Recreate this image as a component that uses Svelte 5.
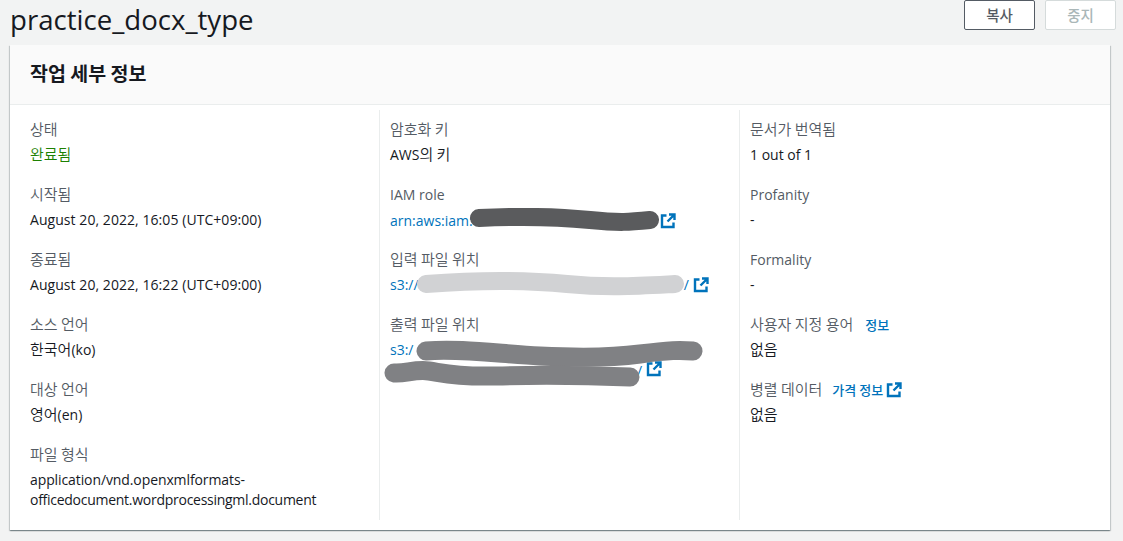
<script>
  const ext = "M6.5 2.5H2v11.5h11.5V9.5 M9 1.5h5.5V7 M14.5 1.5 7.5 8.5";
</script>

<div class="page">
  <header class="top">
    <h1>practice_docx_type</h1>
    <div class="actions">
      <button class="btn">복사</button>
      <button class="btn off">중지</button>
    </div>
  </header>

  <section class="card">
    <div class="card-head"><h2>작업 세부 정보</h2></div>
    <div class="cols">
      <div class="col">
        <div class="item"><div class="lbl ko">상태</div><div class="val ok ko">완료됨</div></div>
        <div class="item"><div class="lbl ko">시작됨</div><div class="val date">August 20, 2022, 16:05 (UTC+09:00)</div></div>
        <div class="item"><div class="lbl ko">종료됨</div><div class="val date">August 20, 2022, 16:22 (UTC+09:00)</div></div>
        <div class="item"><div class="lbl ko">소스 언어</div><div class="val"><span class="ko">한국어</span>(ko)</div></div>
        <div class="item"><div class="lbl ko">대상 언어</div><div class="val"><span class="ko">영어</span>(en)</div></div>
        <div class="item"><div class="lbl ko">파일 형식</div><div class="val mime"><span class="m1">application/vnd.openxmlformats-</span><br /><span class="m2">officedocument.wordprocessingml.document</span></div></div>
      </div>

      <div class="col">
        <div class="item"><div class="lbl ko">암호화 키</div><div class="val">AWS<span class="ko">의 키</span></div></div>
        <div class="item">
          <div class="lbl en">IAM role</div>
          <div class="val link role">
            <span class="txt">arn:aws:iam:<span class="gap g-role"></span>
              <svg class="mark" style="left:80px;top:-2px" width="190" height="24" viewBox="0 0 190 24"><path d="M9 10C50 8 90 9 120 12S160 14 180 12" fill="none" stroke="#5a5b5d" stroke-width="18" stroke-linecap="round" /></svg>
            </span>
            <svg class="ext" viewBox="0 0 16 16"><path d={ext} /></svg>
          </div>
        </div>
        <div class="item">
          <div class="lbl ko">입력 파일 위치</div>
          <div class="val link">
            <span class="txt">s3://<span class="gap g-in"></span>/
              <svg class="mark" style="left:27px;top:-3px" width="270" height="26" viewBox="0 0 270 26"><path d="M9 13C60 9 110 9 150 13S220 15 258 13" fill="none" stroke="#d1d2d4" stroke-width="18" stroke-linecap="round" /></svg>
            </span>
            <svg class="ext" viewBox="0 0 16 16"><path d={ext} /></svg>
          </div>
        </div>
        <div class="item">
          <div class="lbl ko">출력 파일 위치</div>
          <div class="val link two">
            <span class="txt">s3:/<br /><span class="gap g-out"></span>/
              <svg class="mark" style="left:-6px;top:-4px" width="320" height="56" viewBox="0 0 320 56"><path d="M42 16C76 13 116 19 156 21S226 23 256 19 296 15 309 16" fill="none" stroke="#808184" stroke-width="19" stroke-linecap="round" /><path d="M10 38C21 39 31 34 45 36S71 42 111 41 195 40 246 42" fill="none" stroke="#808184" stroke-width="19" stroke-linecap="round" /></svg>
            </span>
            <svg class="ext" viewBox="0 0 16 16"><path d={ext} /></svg>
          </div>
        </div>
      </div>

      <div class="col">
        <div class="item"><div class="lbl ko">문서가 번역됨</div><div class="val">1 out of 1</div></div>
        <div class="item"><div class="lbl en">Profanity</div><div class="val">-</div></div>
        <div class="item"><div class="lbl en">Formality</div><div class="val">-</div></div>
        <div class="item"><div class="lbl ko">사용자 지정 용어<span class="info">정보</span></div><div class="val ko">없음</div></div>
        <div class="item">
          <div class="lbl ko">병렬 데이터<span class="info price">가격 정보</span><svg class="ext" viewBox="0 0 16 16"><path d={ext} /></svg></div>
          <div class="val ko">없음</div>
        </div>
      </div>
    </div>
  </section>
</div>

<style>
  :global(body) {
    margin: 0;
    background: #f2f3f3;
  }
  .page {
    font-family: "Open Sans", "Noto Sans", "Noto Sans CJK KR", sans-serif;
    font-size: 14px;
    line-height: 22px;
    color: #16191f;
    height: 541px;
    overflow: hidden;
  }
  .ko {
    font-size: 15px;
    font-family: "Noto Sans CJK KR", sans-serif;
    font-weight: 350;
  }
  .top {
    display: flex;
    justify-content: space-between;
    height: 45px;
    padding: 0 7px 0 10px;
  }
  h1 {
    margin: 0;
    font-size: 27.6px;
    font-weight: 400;
    line-height: 38px;
  }
  .actions {
    display: flex;
    gap: 10px;
  }
  .btn {
    width: 71px;
    height: 30px;
    border: 1px solid #545b64;
    border-radius: 2px;
    background: #fff;
    color: #545b64;
    font: 500 14.5px/20px "Noto Sans CJK KR", sans-serif;
    padding: 0;
  }
  .btn.off {
    border-color: #d5dbdb;
    color: #aab7b8;
  }
  .card {
    margin: 0 13px 0 10px;
    height: 485px;
    background: #fff;
    box-shadow: 0 1px 1px 0 rgba(0, 28, 36, 0.3), 1px 1px 1px 0 rgba(0, 28, 36, 0.15), -1px 1px 1px 0 rgba(0, 28, 36, 0.15);
  }
  .card-head {
    height: 60px;
    box-sizing: border-box;
    padding: 17px 20px;
    background: #fafafa;
    border-bottom: 1px solid #eaeded;
  }
  h2 {
    margin: 0;
    font: 700 19.5px/22px "Noto Sans CJK KR", sans-serif;
  }
  .cols {
    display: grid;
    grid-template-columns: repeat(3, 360px);
    padding: 5px 0 0 10px;
  }
  .col {
    box-sizing: border-box;
    height: 410px;
    padding: 8px 10px 0;
    border-right: 1px solid #eaeded;
  }
  .col:last-child {
    border-right: 0;
  }
  .item {
    height: 47px;
    margin-bottom: 18px;
  }
  .lbl {
    color: #545b64;
    height: 22px;
    margin-bottom: 4px;
    white-space: nowrap;
  }
  .lbl.en {
    height: 21px;
    padding-top: 1px;
  }
  .ok {
    color: #1d8102;
  }
  .val {
    line-height: 21px;
  }
  .val.ko {
    line-height: 19px;
  }
  .val .ko {
    line-height: 0;
  }
  .date {
    letter-spacing: 0.06px;
  }
  .mime {
    line-height: 20px;
    padding-top: 1px;
  }
  .m1 {
    letter-spacing: -0.1px;
  }
  .m2 {
    letter-spacing: -0.27px;
  }
  .link {
    color: #0073bb;
    white-space: nowrap;
    display: flex;
    align-items: center;
    gap: 4px;
  }
  .role {
    padding-top: 1px;
  }
  .txt {
    position: relative;
    display: inline-block;
  }
  .mark {
    position: absolute;
    pointer-events: none;
  }
  .gap {
    display: inline-block;
  }
  .g-role {
    width: 183px;
  }
  .g-in {
    width: 265px;
  }
  .g-out {
    width: 247px;
  }
  .two {
    align-items: flex-end;
    line-height: 21px;
  }
  .two .ext {
    margin-bottom: 4px;
  }
  .ext {
    width: 16px;
    height: 16px;
    flex: none;
    fill: none;
    stroke: #0073bb;
    stroke-width: 2.4;
  }
  .info {
    color: #0073bb;
    font-size: 13px;
    font-weight: 500;
    margin-left: 12px;
  }
  .price {
    margin-left: 10px;
    margin-right: 3px;
  }
  .lbl .ext {
    vertical-align: -3px;
  }
</style>
